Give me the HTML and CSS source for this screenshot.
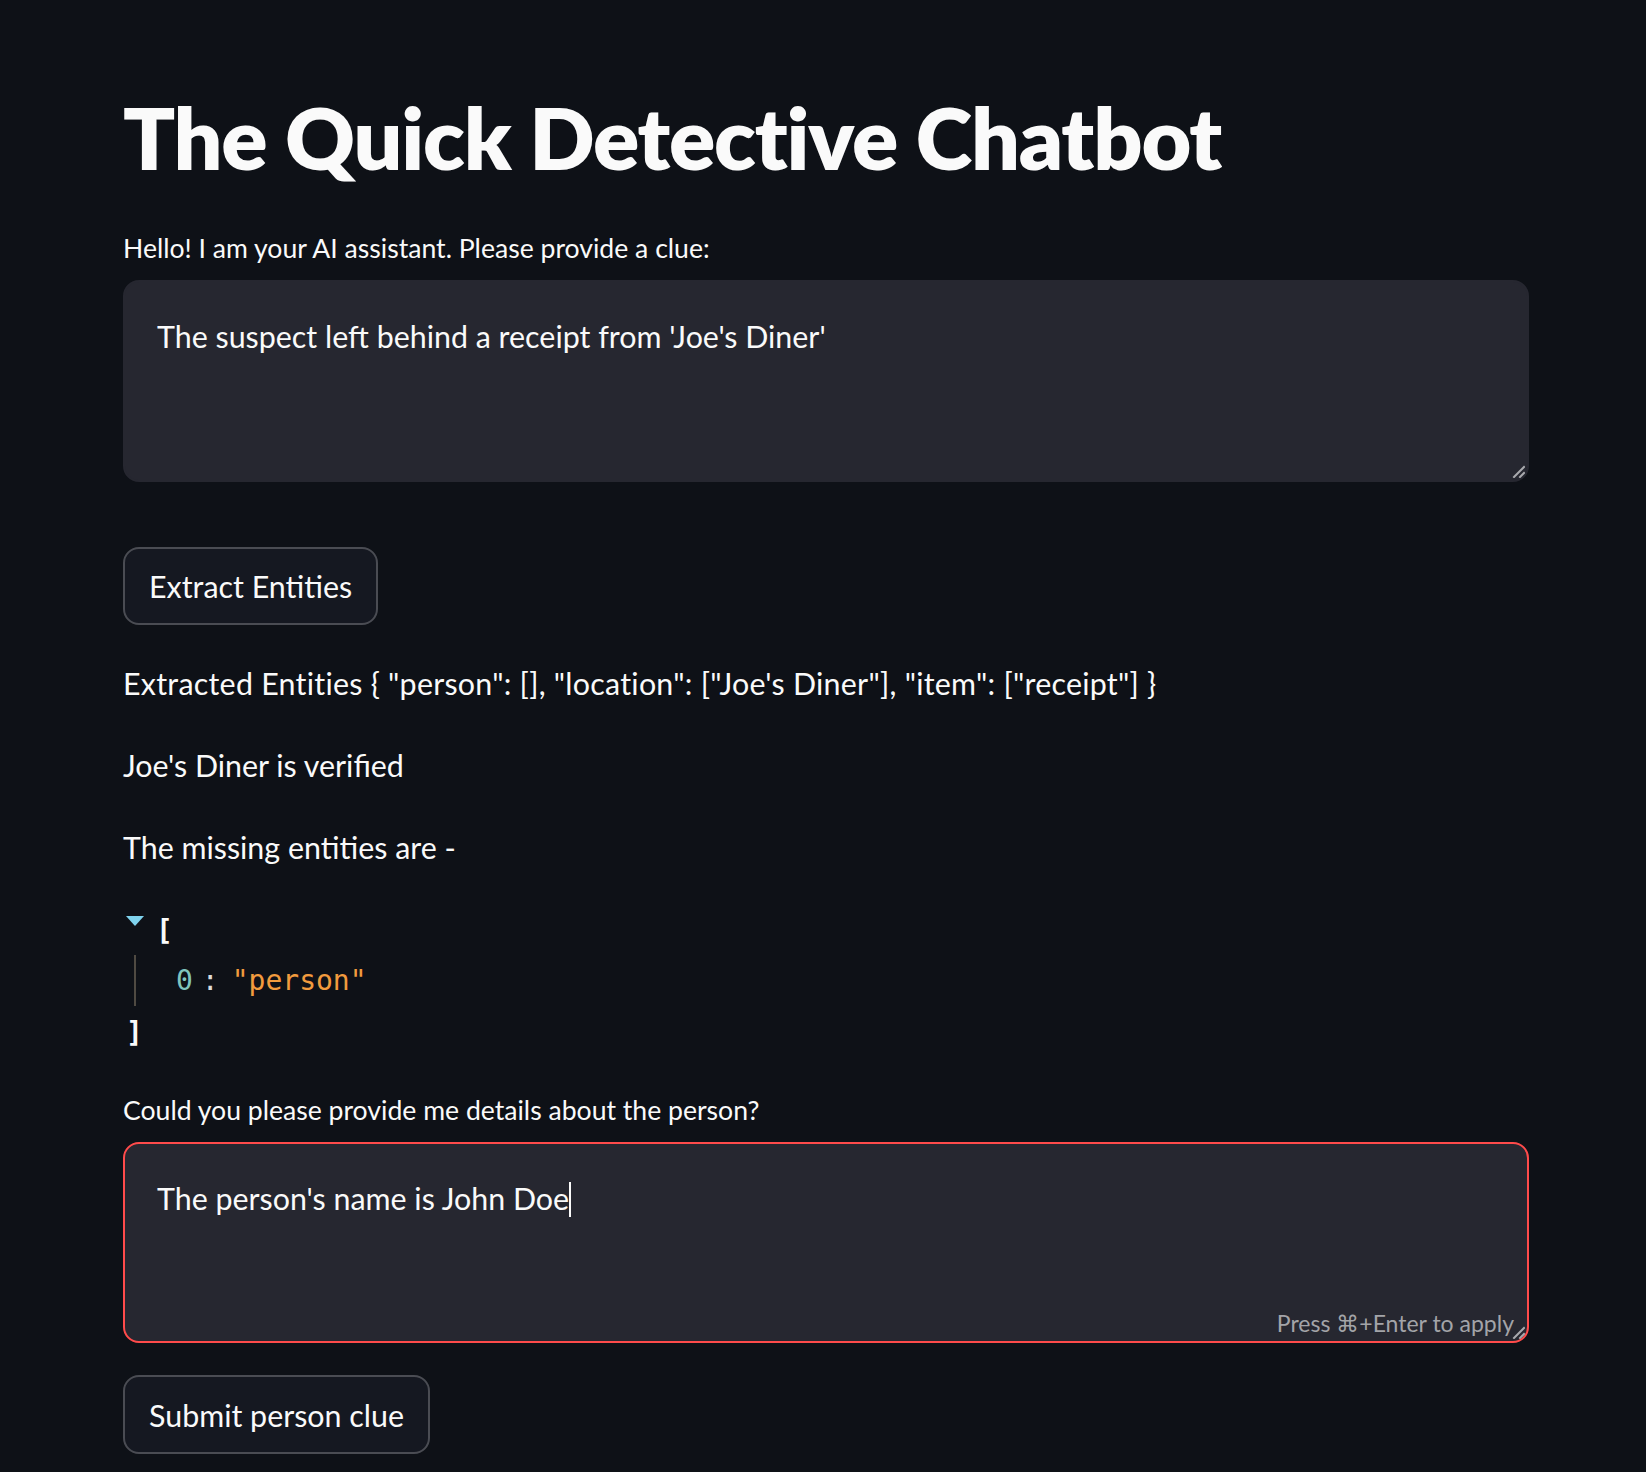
FILE: index.html
```html
<!DOCTYPE html>
<html lang="en">
<head>
<meta charset="utf-8">
<title>The Quick Detective Chatbot</title>
<link rel="stylesheet" href="styles.css">
</head>
<body>
<main class="app">
  <h1 class="title">The Quick Detective Chatbot</h1>

  <label class="label label-first">Hello! I am your AI assistant. Please provide a clue:</label>
  <div class="textarea textarea-first">
    <div class="textarea-text">The suspect left behind a receipt from 'Joe's Diner'</div>
    <svg class="grip" width="14" height="14" viewBox="0 0 14 14"><path d="M13 3 L3 13 M13 9 L9 13" stroke="#a8a9ad" stroke-width="2" stroke-linecap="square" fill="none"/></svg>
  </div>

  <button class="btn btn-first" type="button">Extract Entities</button>

  <p class="md md-first">Extracted Entities { "person": [], "location": ["Joe's Diner"], "item": ["receipt"] }</p>
  <p class="md">Joe's Diner is verified</p>
  <p class="md">The missing entities are -</p>

  <div class="json">
    <div class="json-line json-open"><span class="json-arrow"></span><span class="json-bracket">[</span></div>
    <div class="json-body">
      <div class="json-line"><span class="json-key">0</span><span class="json-colon">:</span><span class="json-str">"person"</span></div>
    </div>
    <div class="json-line json-close"><span class="json-bracket">]</span></div>
  </div>

  <label class="label label-second">Could you please provide me details about the person?</label>
  <div class="textarea textarea-focus">
    <div class="textarea-text">The person's name is John Doe<span class="caret"></span></div>
    <span class="hint">Press ⌘+Enter to apply</span>
    <svg class="grip" width="14" height="14" viewBox="0 0 14 14"><path d="M13 3 L3 13 M13 9 L9 13" stroke="#a8a9ad" stroke-width="2" stroke-linecap="square" fill="none"/></svg>
  </div>

  <button class="btn btn-second" type="button">Submit person clue</button>
</main>
</body>
</html>
```

FILE: styles.css
```css
html, body {
  margin: 0;
  padding: 0;
  background: #0e1117;
}

body {
  color: #fafafa;
  font-family: Lato, "Noto Sans", sans-serif;
  width: 1646px;
  min-height: 1472px;
  overflow: hidden;
}

.app {
  display: flex;
  flex-direction: column;
  align-items: flex-start;
  padding: 84px 0 0 123px;
  width: 1406px;
}

.title {
  margin: 0;
  font-size: 86px;
  line-height: 106px;
  font-weight: 800;
  letter-spacing: -1.2px;
  color: #fafafa;
}

.label {
  display: block;
  font-size: 26.6px;
  line-height: 40px;
  color: #fafafa;
}

.label-first { margin-top: 38px; }
.label-second { margin-top: 33px; }

.textarea {
  position: relative;
  box-sizing: border-box;
  width: 1406px;
  height: 202px;
  margin-top: 12px;
  background: #262730;
  border: 2px solid #262730;
  border-radius: 16px;
  padding: 32px 32px;
}

.textarea-focus {
  margin-top: 12px;
  height: 201px;
  border-color: #ff4b4b;
}

.textarea-text {
  font-size: 30.4px;
  line-height: 44px;
  color: #fafafa;
}

.caret {
  display: inline-block;
  width: 2px;
  height: 35px;
  background: #fafafa;
  vertical-align: -7px;
}

.grip {
  position: absolute;
  right: 2px;
  bottom: 2px;
}

.hint {
  position: absolute;
  right: 13px;
  bottom: 3px;
  font-size: 23px;
  line-height: 30px;
  color: #a3a4a8;
}

.btn {
  box-sizing: border-box;
  height: 78px;
  padding: 0 24px;
  background: #151821;
  color: #fafafa;
  border: 2px solid #4a4c53;
  border-radius: 16px;
  font-family: Lato, "Noto Sans", sans-serif;
  font-size: 30.4px;
  line-height: 48px;
}

.btn-first { margin-top: 65px; }
.btn-second { margin-top: 32px; height: 79px; }

.md {
  margin: 31px 0 0;
  font-size: 30.4px;
  line-height: 51px;
  color: #fafafa;
}

.md-first {
  margin-top: 33px;
  letter-spacing: 0.25px;
}

.json {
  margin-top: 31px;
  font-family: "DejaVu Sans Mono", "Liberation Mono", monospace;
  font-size: 28px;
  line-height: 51px;
  color: #fafafa;
}

.json-line {
  box-sizing: border-box;
  display: flex;
  align-items: center;
  height: 51px;
  white-space: pre;
}

.json-open {
  margin-left: 3px;
  padding-top: 2px;
}

.json-arrow {
  width: 0;
  height: 0;
  border-left: 9px solid transparent;
  border-right: 9px solid transparent;
  border-top: 10px solid #7fd3ee;
  margin-right: 12px;
  margin-top: -20px;
}

.json-bracket { font-weight: 700; }

.json-body {
  margin-left: 11px;
  border-left: 2px solid #4f4a42;
  padding-left: 40px;
}

.json-close {
  margin-left: 3px;
  padding-top: 2px;
}

.json-key { color: #80c4be; }
.json-colon {
  color: #dcdcdc;
  margin: 0 13px 0 9px;
}
.json-str { color: #f29b3e; }
```
